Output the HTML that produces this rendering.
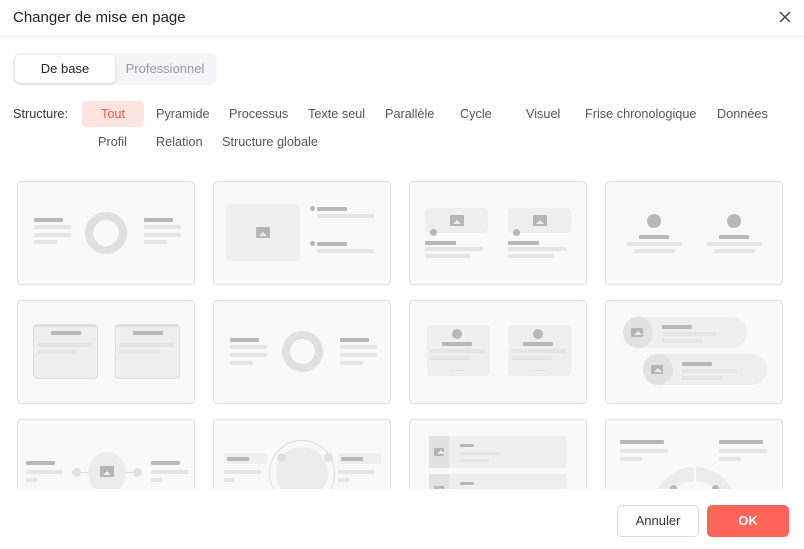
<!DOCTYPE html>
<html><head><meta charset="utf-8"><style>
*{box-sizing:border-box;margin:0;padding:0}
body{width:804px;height:549px;background:#fff;font-family:"Liberation Sans",sans-serif;position:relative;overflow:hidden;color:#333}
.a{position:absolute}
.title{left:13px;top:9px;font-size:15px;color:#222}
.hr{left:0;top:36px;width:804px;height:1px;background:#ececec}
.seg{left:13px;top:53px;width:204px;height:32px;background:#f5f5f7;border-radius:7px}
.segon{left:15px;top:55px;width:100px;height:28px;background:#fff;border-radius:5px;box-shadow:0 1px 3px rgba(0,0,0,.15);font-size:13px;text-align:center;line-height:28px;color:#222}
.segoff{left:115px;top:55px;width:100px;height:28px;font-size:13px;text-align:center;line-height:28px;color:#999}
.t{font-size:12.7px;color:#555;top:106px;line-height:16px}
.t2{top:134px}
.tout{left:82px;top:101px;width:62px;height:26px;background:#fde4df;border-radius:4px;color:#f4564a;font-size:12.7px;text-align:center;line-height:26px}
.grid{left:0;top:170px;width:804px;height:319px;overflow:hidden}
.c{position:absolute;width:178px;height:104px;border:1px solid #e0e0e0;border-radius:4px;background:#f9f9f9}
.c div{position:absolute}
.d{background:#b8b8b8;height:4px;border-radius:1px}
.l{background:#e5e5e5;height:4px;border-radius:1px}
.bx{background:#efefef;border-radius:4px}
.ic{width:14px;height:11px;background:#b5b5b5;border-radius:1px}
.ic:after{content:"";position:absolute;left:3px;bottom:2px;border-left:4px solid transparent;border-right:4px solid transparent;border-bottom:4px solid #eee}
.dot{background:#b8b8b8;border-radius:50%}
.btn{top:505px;height:32px;border-radius:5px;font-size:13px;text-align:center;line-height:30px}
</style></head><body>
<div class="a title">Changer de mise en page</div>
<svg class="a" style="left:778px;top:10px" width="14" height="14" viewBox="0 0 14 14"><path d="M2 2L12 12M12 2L2 12" stroke="#444" stroke-width="1.5"/></svg>
<div class="a hr"></div>
<div class="a seg"></div><div class="a segon">De base</div><div class="a segoff">Professionnel</div>
<div class="a t" style="left:13px;color:#333">Structure:</div>
<div class="a tout">Tout</div>
<div class="a t" style="left:156px">Pyramide</div>
<div class="a t" style="left:229px">Processus</div>
<div class="a t" style="left:308px">Texte seul</div>
<div class="a t" style="left:385px">Parallèle</div>
<div class="a t" style="left:460px">Cycle</div>
<div class="a t" style="left:526px">Visuel</div>
<div class="a t" style="left:585px">Frise chronologique</div>
<div class="a t" style="left:717px">Données</div>
<div class="a t t2" style="left:98px">Profil</div>
<div class="a t t2" style="left:156px">Relation</div>
<div class="a t t2" style="left:222px">Structure globale</div>

<div class="a grid">
<div class="c" style="left:17px;top:11px">
 <div class="d" style="left:16px;top:36px;width:29px"></div><div class="l" style="left:16px;top:43px;width:37px"></div><div class="l" style="left:16px;top:51px;width:37px"></div><div class="l" style="left:16px;top:58px;width:23px"></div>
 <div style="left:67px;top:30px;width:42px;height:42px;border:8px solid #e0e0e0;border-radius:50%"></div>
 <div class="d" style="left:126px;top:36px;width:29px"></div><div class="l" style="left:126px;top:43px;width:37px"></div><div class="l" style="left:126px;top:51px;width:37px"></div><div class="l" style="left:126px;top:58px;width:23px"></div>
</div>
<div class="c" style="left:213px;top:11px">
 <div class="bx" style="left:12px;top:22px;width:74px;height:57px"></div><div class="ic" style="left:42px;top:45px"></div>
 <div class="dot" style="left:96px;top:24px;width:5px;height:5px"></div><div class="d" style="left:103px;top:25px;width:30px"></div><div class="l" style="left:103px;top:32px;width:57px"></div>
 <div class="dot" style="left:96px;top:59px;width:5px;height:5px"></div><div class="d" style="left:103px;top:60px;width:30px"></div><div class="l" style="left:103px;top:67px;width:57px"></div>
</div>
<div class="c" style="left:409px;top:11px">
 <div class="bx" style="left:15px;top:26px;width:63px;height:25px"></div><div class="ic" style="left:40px;top:33px"></div>
 <div class="dot" style="left:20px;top:47px;width:7px;height:7px"></div>
 <div class="d" style="left:15px;top:59px;width:31px"></div><div class="l" style="left:15px;top:65px;width:58px"></div><div class="l" style="left:15px;top:72px;width:46px"></div>
 <div class="bx" style="left:98px;top:26px;width:63px;height:25px"></div><div class="ic" style="left:123px;top:33px"></div>
 <div class="dot" style="left:103px;top:47px;width:7px;height:7px"></div>
 <div class="d" style="left:98px;top:59px;width:31px"></div><div class="l" style="left:98px;top:65px;width:58px"></div><div class="l" style="left:98px;top:72px;width:46px"></div>
</div>
<div class="c" style="left:605px;top:11px">
 <div class="dot" style="left:41px;top:32px;width:14px;height:14px"></div><div class="d" style="left:33px;top:53px;width:30px"></div><div class="l" style="left:21px;top:60px;width:55px"></div><div class="l" style="left:28px;top:67px;width:41px"></div>
 <div class="dot" style="left:121px;top:32px;width:14px;height:14px"></div><div class="d" style="left:113px;top:53px;width:30px"></div><div class="l" style="left:101px;top:60px;width:55px"></div><div class="l" style="left:108px;top:67px;width:41px"></div>
</div>
<div class="c" style="left:17px;top:130px">
 <div class="bx" style="left:15px;top:23px;width:65px;height:55px;border:1px solid #ddd;border-top:3px solid #e0e0e0"></div>
 <div class="d" style="left:33px;top:30px;width:30px"></div><div class="l" style="left:19px;top:42px;width:55px"></div><div class="l" style="left:19px;top:49px;width:41px"></div>
 <div class="bx" style="left:97px;top:23px;width:65px;height:55px;border:1px solid #ddd;border-top:3px solid #e0e0e0"></div>
 <div class="d" style="left:115px;top:30px;width:30px"></div><div class="l" style="left:101px;top:42px;width:55px"></div><div class="l" style="left:101px;top:49px;width:41px"></div>
</div>
<div class="c" style="left:213px;top:130px">
 <div class="d" style="left:16px;top:37px;width:29px"></div><div class="l" style="left:16px;top:44px;width:37px"></div><div class="l" style="left:16px;top:52px;width:37px"></div><div class="l" style="left:16px;top:60px;width:23px"></div>
 <div style="left:68px;top:30px;width:41px;height:41px;border:8px solid #e0e0e0;border-radius:50%"></div>
 <div class="d" style="left:126px;top:37px;width:29px"></div><div class="l" style="left:126px;top:44px;width:37px"></div><div class="l" style="left:126px;top:52px;width:37px"></div><div class="l" style="left:126px;top:60px;width:23px"></div>
</div>
<div class="c" style="left:409px;top:130px">
 <div class="bx" style="left:17px;top:24px;width:63px;height:51px"></div><div class="dot" style="left:42px;top:28px;width:10px;height:10px"></div>
 <div class="d" style="left:32px;top:41px;width:30px"></div><div class="l" style="left:20px;top:48px;width:55px"></div><div class="l" style="left:20px;top:55px;width:41px"></div><div class="l" style="left:40px;top:69px;width:16px;height:1px"></div>
 <div class="bx" style="left:98px;top:24px;width:63px;height:51px"></div><div class="dot" style="left:123px;top:28px;width:10px;height:10px"></div>
 <div class="d" style="left:113px;top:41px;width:30px"></div><div class="l" style="left:101px;top:48px;width:55px"></div><div class="l" style="left:101px;top:55px;width:41px"></div><div class="l" style="left:121px;top:69px;width:16px;height:1px"></div>
</div>
<div class="c" style="left:605px;top:130px">
 <div class="bx" style="left:17px;top:16px;width:124px;height:31px;border-radius:16px"></div><div class="dot" style="left:17px;top:16px;width:30px;height:31px;background:#e2e2e2"></div><div class="ic" style="left:25px;top:27px;width:12px;height:9px"></div>
 <div class="d" style="left:56px;top:24px;width:30px"></div><div class="l" style="left:56px;top:31px;width:55px"></div><div class="l" style="left:56px;top:38px;width:41px"></div>
 <div class="bx" style="left:37px;top:53px;width:124px;height:31px;border-radius:16px"></div><div class="dot" style="left:37px;top:53px;width:30px;height:31px;background:#e2e2e2"></div><div class="ic" style="left:45px;top:64px;width:12px;height:9px"></div>
 <div class="d" style="left:76px;top:61px;width:30px"></div><div class="l" style="left:76px;top:68px;width:55px"></div><div class="l" style="left:76px;top:75px;width:41px"></div>
</div>
<div class="c" style="left:17px;top:249px">
 <div class="d" style="left:8px;top:41px;width:29px"></div><div class="l" style="left:8px;top:50px;width:37px"></div><div class="l" style="left:8px;top:58px;width:11px"></div>
 <div class="l" style="left:58px;top:52px;width:62px;height:1px;background:#ddd"></div>
 <div class="dot" style="left:54px;top:48px;width:9px;height:9px;background:#e0e0e0"></div>
 <div class="dot" style="left:115px;top:48px;width:9px;height:9px;background:#e0e0e0"></div>
 <div class="dot" style="left:70px;top:32px;width:38px;height:42px;background:#ececec"></div><div class="ic" style="left:82px;top:46px"></div>
 <div class="d" style="left:133px;top:41px;width:29px"></div><div class="l" style="left:133px;top:50px;width:37px"></div><div class="l" style="left:133px;top:58px;width:11px"></div>
</div>
<div class="c" style="left:213px;top:249px">
 <div class="bx" style="left:10px;top:33px;width:43px;height:11px;border-radius:2px"></div><div class="d" style="left:13px;top:37px;width:22px"></div>
 <div class="l" style="left:10px;top:50px;width:37px"></div><div class="l" style="left:10px;top:58px;width:11px"></div>
 <div style="left:55px;top:20px;width:66px;height:66px;border:1px solid #ddd;border-radius:50%"></div>
 <div class="dot" style="left:62px;top:27px;width:52px;height:52px;background:#ececec"></div>
 <div class="dot" style="left:63px;top:33px;width:9px;height:9px;background:#e0e0e0"></div>
 <div class="dot" style="left:110px;top:33px;width:9px;height:9px;background:#e0e0e0"></div>
 <div class="bx" style="left:124px;top:33px;width:43px;height:11px;border-radius:2px"></div><div class="d" style="left:127px;top:37px;width:22px"></div>
 <div class="l" style="left:124px;top:50px;width:37px"></div><div class="l" style="left:124px;top:58px;width:11px"></div>
</div>
<div class="c" style="left:409px;top:249px">
 <div class="bx" style="left:19px;top:16px;width:138px;height:32px;border-radius:0"></div><div style="left:19px;top:16px;width:20px;height:32px;background:#e2e2e2"></div><div class="ic" style="left:24px;top:28px;width:10px;height:8px"></div>
 <div class="d" style="left:50px;top:24px;width:14px;height:3px"></div><div class="l" style="left:50px;top:32px;width:40px;height:3px"></div><div class="l" style="left:50px;top:39px;width:29px;height:3px"></div>
 <div class="bx" style="left:19px;top:54px;width:138px;height:32px;border-radius:0"></div><div style="left:19px;top:54px;width:20px;height:32px;background:#e2e2e2"></div><div class="ic" style="left:24px;top:66px;width:10px;height:8px"></div>
 <div class="d" style="left:50px;top:62px;width:14px;height:3px"></div>
</div>
<div class="c" style="left:605px;top:249px">
 <div class="d" style="left:14px;top:20px;width:44px"></div><div class="l" style="left:14px;top:29px;width:48px"></div><div class="l" style="left:14px;top:37px;width:22px"></div>
 <div class="d" style="left:113px;top:20px;width:44px"></div><div class="l" style="left:113px;top:29px;width:48px"></div><div class="l" style="left:113px;top:37px;width:22px"></div>
 <div style="left:47px;top:47px;width:84px;height:84px;border:14px solid #ececec;border-radius:50%"></div>
 <div style="left:88px;top:47px;width:2px;height:14px;background:#f9f9f9"></div>
 <div class="dot" style="left:64px;top:65px;width:7px;height:7px"></div>
 <div class="dot" style="left:106px;top:65px;width:7px;height:7px"></div>
</div>
</div>

<div class="a btn" style="left:617px;width:82px;border:1px solid #d9d9d9;color:#333">Annuler</div>
<div class="a btn" style="left:707px;width:82px;background:#fe6458;color:#fff;font-weight:bold;line-height:32px">OK</div>
</body></html>
